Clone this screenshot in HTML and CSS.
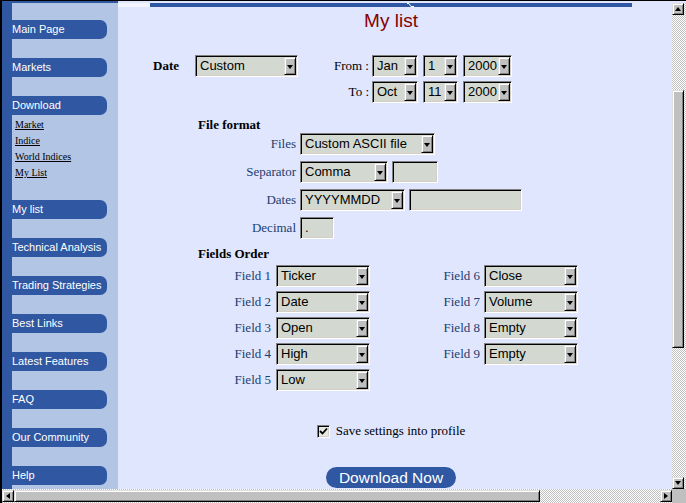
FILE: index.html
```html
<!DOCTYPE html>
<html lang="en">
<head>
<meta charset="utf-8">
<title>My list</title>
<link rel="stylesheet" href="styles.css">
</head>
<body>
<div class="frame">
  <div class="main">
    <nav class="sidebar">
      <div class="side-inner">
        <a class="nav first" href="#">Main Page</a>
        <a class="nav" href="#">Markets</a>
        <a class="nav" href="#">Download</a>
        <ul class="sublinks">
          <li><a href="#">Market</a></li>
          <li><a href="#">Indice</a></li>
          <li><a href="#">World Indices</a></li>
          <li><a href="#">My List</a></li>
        </ul>
        <a class="nav" href="#">My list</a>
        <a class="nav" href="#">Technical Analysis</a>
        <a class="nav" href="#">Trading Strategies</a>
        <a class="nav" href="#">Best Links</a>
        <a class="nav" href="#">Latest Features</a>
        <a class="nav" href="#">FAQ</a>
        <a class="nav" href="#">Our Community</a>
        <a class="nav" href="#">Help</a>
      </div>
    </nav>
    <main class="content">
      <div class="topbar">
        <span class="topbar-light"></span>
        <span class="topbar-blue"><svg class="tick" width="7" height="4" viewBox="0 0 7 4"><path d="M0 0.5 H2 L4 3.5 H7" stroke="#fff" stroke-width="1" fill="none"/></svg></span>
      </div>
      <h1 class="title">My list</h1>

      <div class="date-row">
        <span class="lbl-date">Date</span>
        <span class="sel w-range"><span class="val">Custom</span><span class="arr"></span></span>
        <span class="lbl-ft">From :</span>
        <span class="sel w-mon"><span class="val">Jan</span><span class="arr"></span></span>
        <span class="sel w-day gap5"><span class="val">1</span><span class="arr"></span></span>
        <span class="sel w-year gap5"><span class="val">2000</span><span class="arr"></span></span>
      </div>
      <div class="to-row">
        <span class="lbl-ft">To :</span>
        <span class="sel w-mon"><span class="val">Oct</span><span class="arr"></span></span>
        <span class="sel w-day gap5"><span class="val">11</span><span class="arr"></span></span>
        <span class="sel w-year gap5"><span class="val">2000</span><span class="arr"></span></span>
      </div>

      <div class="heading hd-file">File format</div>
      <div class="ff-row first-ff">
        <span class="ff-lbl">Files</span>
        <span class="sel w-files"><span class="val">Custom ASCII file</span><span class="arr"></span></span>
      </div>
      <div class="ff-row">
        <span class="ff-lbl">Separator</span>
        <span class="sel w-sep"><span class="val">Comma</span><span class="arr"></span></span>
        <span class="inp w-sepin gap4"></span>
      </div>
      <div class="ff-row">
        <span class="ff-lbl">Dates</span>
        <span class="sel w-dates"><span class="val">YYYYMMDD</span><span class="arr"></span></span>
        <span class="inp w-datesin gap4"></span>
      </div>
      <div class="ff-row">
        <span class="ff-lbl">Decimal</span>
        <span class="inp w-dec"><span class="val">.</span></span>
      </div>

      <div class="heading hd-fields">Fields Order</div>
      <div class="fields">
        <span class="f-lbl">Field 1</span>
        <span class="sel w-field"><span class="val">Ticker</span><span class="arr"></span></span>
        <span class="f-lbl r">Field 6</span>
        <span class="sel w-field"><span class="val">Close</span><span class="arr"></span></span>

        <span class="f-lbl">Field 2</span>
        <span class="sel w-field"><span class="val">Date</span><span class="arr"></span></span>
        <span class="f-lbl r">Field 7</span>
        <span class="sel w-field"><span class="val">Volume</span><span class="arr"></span></span>

        <span class="f-lbl">Field 3</span>
        <span class="sel w-field"><span class="val">Open</span><span class="arr"></span></span>
        <span class="f-lbl r">Field 8</span>
        <span class="sel w-field"><span class="val">Empty</span><span class="arr"></span></span>

        <span class="f-lbl">Field 4</span>
        <span class="sel w-field"><span class="val">High</span><span class="arr"></span></span>
        <span class="f-lbl r">Field 9</span>
        <span class="sel w-field"><span class="val">Empty</span><span class="arr"></span></span>

        <span class="f-lbl">Field 5</span>
        <span class="sel w-field"><span class="val">Low</span><span class="arr"></span></span>
      </div>

      <div class="center save-row">
        <span class="check"><svg width="9" height="9" viewBox="0 0 9 9"><path d="M1 4 L3.5 6.5 L8 1.5" stroke="#000" stroke-width="1.8" fill="none"/></svg></span>
        <span class="save-text">Save settings into profile</span>
      </div>
      <div class="center dl-row">
        <a class="dl-btn" href="#">Download Now</a>
      </div>
    </main>
  </div>

  <div class="vscroll">
    <div class="sb-btn vbtn"><span class="tri-up"></span></div>
    <div class="vtrack"><div class="thumb vthumb"></div></div>
    <div class="sb-btn vbtn"><span class="tri-down"></span></div>
  </div>

  <div class="hscroll">
    <div class="sb-btn hbtn"><span class="tri-left"></span></div>
    <div class="thumb hthumb"></div>
    <div class="htrack"></div>
    <div class="sb-btn hbtn"><span class="tri-right"></span></div>
  </div>
  <div class="corner"></div>
</div>
</body>
</html>
```

FILE: styles.css
```css
* { box-sizing: border-box; }
html, body { margin: 0; padding: 0; }
body {
  width: 686px;
  height: 503px;
  overflow: hidden;
  background: #000;
  font-family: "Liberation Serif", "Times New Roman", serif;
}

.frame {
  display: grid;
  grid-template-columns: 670px 14px;
  grid-template-rows: 488px 14px;
  width: 686px;
  height: 503px;
  border-top: 1px solid #000;
  border-left: 2px solid #000;
}

.main {
  grid-column: 1;
  grid-row: 1;
  display: flex;
  overflow: hidden;
}

/* ---------- sidebar ---------- */
.sidebar {
  width: 116px;
  flex: none;
  background: #3057a2;
  padding: 2px 0 0 10px;
}
.side-inner {
  height: 100%;
  background: #b2c5e4;
  display: flex;
  flex-direction: column;
  align-items: flex-start;
}
.nav {
  display: block;
  width: 95px;
  height: 19px;
  margin-top: 19px;
  background: #3057a2;
  color: #fff;
  font: 11px/19px "Liberation Sans", Arial, sans-serif;
  text-decoration: none;
  border-radius: 0 7px 7px 0;
  white-space: nowrap;
}
.nav.first { margin-top: 17px; }
.sublinks {
  list-style: none;
  margin: 2px 0 0;
  padding: 0 0 0 3px;
  font: 10px/16px "Liberation Serif", "Times New Roman", serif;
}
.sublinks a { color: #000; text-decoration: underline; }

/* ---------- content ---------- */
.content {
  width: 554px;
  flex: none;
  background: #dfe6fe;
  display: flex;
  flex-direction: column;
  font-size: 13px;
}
.topbar {
  display: flex;
  margin-top: 2px;
  height: 4px;
}
.topbar-light { width: 32px; background: #f2f5ff; }
.topbar-blue {
  width: 482px;
  background: #3057a2;
  display: flex;
  align-items: flex-start;
}
.tick { margin-left: 257px; display: block; }

.title {
  margin: 4px 0 0;
  width: 546px;
  text-align: center;
  font: 19px/19px "Liberation Sans", Arial, sans-serif;
  color: #880000;
}

/* select / input look */
.sel, .inp {
  display: flex;
  height: 22px;
  padding: 1px;
  border: 1px solid;
  border-color: #808080 #fff #fff #808080;
  box-shadow: inset 1px 1px #000, inset -1px -1px #d4d0c8;
  background: #d3d9d1;
  font: 13px/18px "Liberation Sans", Arial, sans-serif;
  color: #000;
  flex: none;
}
.val {
  flex: 1;
  padding-left: 3px;
  white-space: nowrap;
  overflow: hidden;
}
.arr {
  width: 12px;
  flex: none;
  background: #c0c0c0;
  border: 1px solid;
  border-color: #dfdfdf #000 #000 #dfdfdf;
  box-shadow: inset 1px 1px #fff, inset -1px -1px #808080;
  display: flex;
  align-items: center;
  justify-content: center;
}
.arr::after {
  content: "";
  border-left: 3.5px solid transparent;
  border-right: 3.5px solid transparent;
  border-top: 4px solid #000;
  margin-top: 1px;
}
.gap5 { margin-left: 5px; }
.gap4 { margin-left: 4px; }

.w-range { width: 103px; }
.w-mon { width: 46px; }
.w-day { width: 35px; }
.w-year { width: 49px; }
.w-files { width: 135px; }
.w-sep { width: 88px; }
.w-sepin { width: 46px; }
.w-dates { width: 105px; }
.w-datesin { width: 113px; }
.w-dec { width: 34px; }
.w-field { width: 94px; }

.date-row {
  display: flex;
  align-items: center;
  height: 22px;
  margin-top: 25px;
  padding-left: 35px;
}
.to-row {
  display: flex;
  align-items: center;
  height: 22px;
  margin-top: 4px;
  padding-left: 180px;
}
.lbl-date { width: 42px; font-weight: bold; }
.lbl-ft { width: 71px; text-align: right; margin-right: 3px; }

.heading {
  font-weight: bold;
  line-height: 14px;
  padding-left: 80px;
}
.hd-file { margin-top: 15px; }
.hd-fields { margin-top: 8px; }

.ff-row {
  display: flex;
  align-items: center;
  height: 22px;
  margin-top: 6px;
}
.ff-row.first-ff { margin-top: 1px; }
.ff-lbl {
  width: 178px;
  margin-right: 4px;
  text-align: right;
  color: #1b3d6f;
}

.fields {
  display: grid;
  grid-template-columns: 158px 94px 114px 94px;
  grid-auto-rows: 22px;
  row-gap: 4px;
  margin-top: 4px;
  align-items: center;
}
.f-lbl {
  text-align: right;
  padding-right: 5px;
  color: #1b3d6f;
}
.f-lbl.r { padding-right: 4px; }

.center {
  width: 546px;
  display: flex;
  justify-content: center;
  align-items: center;
}
.save-row {
  margin-top: 33px;
  height: 14px;
  line-height: 14px;
}
.check {
  width: 13px;
  height: 13px;
  margin-right: 6px;
  border: 1px solid;
  border-color: #808080 #fff #fff #808080;
  box-shadow: inset 1px 1px #000, inset -1px -1px #d4d0c8;
  background: #e6e9e3;
  display: flex;
  align-items: center;
  justify-content: center;
}
.check svg { display: block; }
.dl-row { margin-top: 29px; }
.dl-btn {
  display: block;
  width: 130px;
  height: 21px;
  border-radius: 11px;
  background: #3057a2;
  color: #fff;
  text-align: center;
  font: 15.5px/21px "Liberation Sans", Arial, sans-serif;
  text-decoration: none;
}

/* ---------- scrollbars ---------- */
.sb-btn, .thumb {
  background: #c0c0c0;
  border: 1px solid;
  border-color: #dfdfdf #000 #000 #dfdfdf;
  box-shadow: inset 1px 1px #fff, inset -1px -1px #808080;
}
.sb-btn {
  display: flex;
  align-items: center;
  justify-content: center;
  flex: none;
  width: 12px;
  height: 12px;
}

.vscroll {
  grid-column: 2;
  grid-row: 1;
  padding-top: 2px;
  display: flex;
  flex-direction: column;
  align-items: flex-start;
  background:
    linear-gradient(#dfe6fe, #dfe6fe) 0 0 / 100% 2px no-repeat,
    repeating-conic-gradient(#c0c0c0 0 25%, #fff 0 50%) 0 0 / 2px 2px;
}
.vtrack {
  flex: 1;
  width: 14px;
  padding-top: 75px;
}
.vthumb { width: 12px; height: 258px; }

.hscroll {
  grid-column: 1;
  grid-row: 2;
  display: flex;
  align-items: flex-start;
  padding-top: 1px;
  background: repeating-conic-gradient(#c0c0c0 0 25%, #fff 0 50%) 0 0 / 2px 2px;
}
.hthumb { width: 526px; height: 12px; flex: none; }
.htrack { flex: 1; }

.tri-up {
  border-left: 3.5px solid transparent;
  border-right: 3.5px solid transparent;
  border-bottom: 4px solid #000;
}
.tri-down {
  border-left: 3.5px solid transparent;
  border-right: 3.5px solid transparent;
  border-top: 4px solid #000;
}
.tri-left {
  border-top: 3.5px solid transparent;
  border-bottom: 3.5px solid transparent;
  border-right: 4px solid #000;
}
.tri-right {
  border-top: 3.5px solid transparent;
  border-bottom: 3.5px solid transparent;
  border-left: 4px solid #000;
}
.corner {
  grid-column: 2;
  grid-row: 2;
  background: #c0c0c0;
}
```
